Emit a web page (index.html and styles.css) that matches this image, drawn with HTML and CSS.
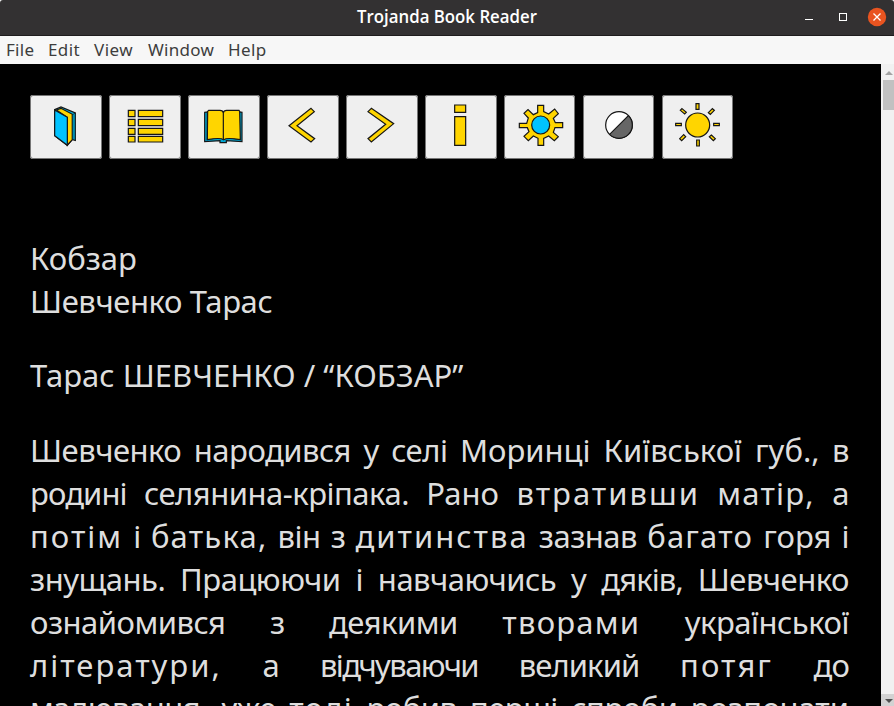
FILE: index.html
```html
<!DOCTYPE html>
<html lang="uk">
<head>
<meta charset="utf-8">
<title>Trojanda Book Reader</title>
<link rel="stylesheet" href="styles.css">
</head>
<body>
<div class="window">
  <header class="titlebar">
    <svg class="title" width="182" height="36"><text x="1" y="23" textLength="180" lengthAdjust="spacingAndGlyphs">Trojanda Book Reader</text></svg>
    <svg class="controls" viewBox="0 0 94 36" width="94" height="36">
      <path d="M5 19.5h8" stroke="#fff"/>
      <rect x="39.5" y="13.5" width="7" height="7" fill="none" stroke="#fff"/>
      <circle cx="77" cy="17" r="9.2" fill="#e95420"/>
      <path d="M73.5 13.5l7 7m0-7l-7 7" stroke="#fff" stroke-width="1.3"/>
    </svg>
  </header>
  <nav class="menubar">
    <span class="m-file">File</span><span class="m-edit">Edit</span><span class="m-view">View</span><span class="m-window">Window</span><span class="m-help">Help</span>
  </nav>
  <div class="body">
    <main class="page">
      <div class="toolbar">
        <button class="tool" aria-label="Open"><svg viewBox="30 27 216 192">
          <path d="M104 71l19-8 43 18v82l-9-3-15 18-38-29z" fill="#00b4e0"/>
          <path d="M109 72l14-5 34 18v76l-15 16V94z" fill="#ffd500"/>
          <path d="M104 72l38 22v84l-38-29z" fill="#00c3ff"/>
          <path d="M157 86l9-5v82l-9-3z" fill="#008fb0" stroke-width="2"/></svg></button>
        <button class="tool" aria-label="Contents"><svg viewBox="267 27 216 192">
          <g class="gold"><path d="M325 73h20v19h-20zM355 73h73v19h-73zM325 100h20v19h-20zM355 100h73v19h-73zM325 127h20v18h-20zM355 127h73v18h-73zM325 151h20v17h-20zM355 151h73v17h-73z"/></g></svg></button>
        <button class="tool" aria-label="Book"><svg viewBox="504 27 216 192">
          <path d="M554 79l8-1v82l37-5 11 4 11-4 37 5V78l8 1v88l-47-3v6h-19v-6l-46 3z" fill="#00a9d6"/>
          <path d="M563 76l3-3h34q9 0 10 8 1-8 10-8h37l2 3 2 85q-40-7-50 0-10-7-49 0z" fill="#ffd500"/>
          <path d="M610 80v79"/></svg></button>
        <button class="tool" aria-label="Previous"><svg viewBox="22 27 216 192">
          <path class="gold" d="M154 67l10 10-52 42 53 39-11 10-66-49z"/></svg></button>
        <button class="tool" aria-label="Next"><svg viewBox="259 27 216 192">
          <path class="gold" d="M335 67l-10 10 53 38-53 43 10 10 67-55z"/></svg></button>
        <button class="tool" aria-label="Information"><svg viewBox="496 27 216 192">
          <path class="gold" d="M585 57h33v22h-33zM585 92h33v86h-33z"/></svg></button>
        <button class="tool narrow" aria-label="Settings"><svg viewBox="42 27 213 192">
          <path class="gold" d="M143 58h18v19l15 7 18-15 11 14-15 14 6 13h22v15h-23l-5 14 15 13-12 12-17-14-15 7v21h-17v-21l-14-7-15 14-13-13 15-14-5-12H88v-13h22l5-16-13-14 12-11 16 15 13-6z"/>
          <circle cx="152" cy="117" r="27" fill="#00c3ff"/></svg></button>
        <button class="tool narrow" aria-label="Contrast"><svg viewBox="279 27 213 192">
          <circle cx="387" cy="117" r="40" fill="#fff"/>
          <path d="M415.300 88.700a40 40 0 0 1-56.600 56.600z" fill="#666"/></svg></button>
        <button class="tool narrow" aria-label="Brightness"><svg viewBox="516 27 213 192">
          <g class="gold"><circle cx="623" cy="117" r="36"/>
          <path d="M618 53h9v17h-9zM620 162h8v18h-8zM557 112h17v7h-17zM671 112h17v7h-17zM576 68l13 11-5 5-13-11zM667 68l-12 12 6 5 12-12zM581 146l-12 12 6 6 12-12zM664 147l12 11-6 6-12-12z"/></g></svg></button>
      </div>
      <article class="book">
        <p class="heading"><span class="w1">Кобзар</span><br><span class="w2">Шевченко Тарас</span></p>
        <p class="heading last"><span class="w3">Тарас ШЕВЧЕНКО / “КОБЗАР”</span></p>
        <p class="text">
          <span class="line">Шевченко народився у селі <b class="n">Моринці Київської губ.,</b> в</span>
          <span class="line"><b class="s">родині</b> селянина-кріпака. <b class="n">Рано</b> <b class="xw">втративши</b> <b class="w">матір,</b> а</span>
          <span class="line"><b class="xw">потім</b> і <b class="w">батька,</b> він з <b class="xw">дитинства</b> зазнав <b class="w">багато</b> <b class="n">горя</b> і</span>
          <span class="line">знущань. Працюючи і навчаючись у <b class="s">дяків,</b> Шевченко</span>
          <span class="line">ознайомився з деякими <b class="w">творами</b> української</span>
          <span class="line"><b class="xw">літератури,</b> а <b class="xs">відчуваючи</b> <b class="s">великий</b> <b class="xw">потяг</b> <b class="s">до</b></span>
          <span class="line">малювання, уже <b class="w">тоді</b> робив перші спроби <b class="n">розпочати</b></span>
        </p>
      </article>
    </main>
    <aside class="scrollbar">
      <svg class="arrow" viewBox="0 0 13 16"><path d="M4 11l4-4 4 4z" fill="#a3a3a3"/></svg>
      <div class="thumb"></div>
      <svg class="arrow down" viewBox="0 0 13 12"><path d="M4 5h8l-4 4z" fill="#505050"/></svg>
    </aside>
  </div>
</div>
</body>
</html>
```
FILE: styles.css
```css
* { box-sizing: border-box; }
body { margin: 0; background: #fff; overflow: hidden; font-family: "Noto Sans", "Open Sans", sans-serif; }
.window { height: 706px; display: flex; flex-direction: column; border-radius: 3px 3px 0 0; overflow: hidden; }
.titlebar { height: 36px; flex: none; padding-left: 356px; background: #333132; border-bottom: 1px solid #1e1c1d; display: flex; justify-content: space-between; }
.title { overflow: visible; fill: #fff; font: 600 17.5px "Open Sans", sans-serif; }
.menubar { height: 28px; flex: none; padding-left: 6px; background: #f7f7f7; color: #3d3d3d; display: flex; font-size: 17px; line-height: 27px; }
.m-file { width: 42px; letter-spacing: .3px; }
.m-edit { width: 46px; letter-spacing: .4px; }
.m-view { width: 54px; letter-spacing: .5px; }
.m-window { width: 80px; letter-spacing: .3px; }
.m-help { letter-spacing: .4px; }
.body { flex: 1; min-height: 0; display: flex; }
.page { width: 881px; background: #000; padding: 31px 32px 0 30px; overflow: hidden; }
.toolbar { display: flex; gap: 7px; }
.tool { width: 72px; height: 64px; flex: none; padding: 0; border: 0; border-radius: 3px; background: #efefef; box-shadow: inset 0 0 0 1px #767676; }
.narrow { width: 71px; }
.narrow + .narrow { margin-left: 1px; }
.tool svg { display: block; width: 100%; height: 100%; fill: none; stroke: #161616; stroke-width: 3.6; }
.tool .gold { fill: #ffd500; }
.book { margin-top: 78px; color: #dedede; font-size: 31px; line-height: 43px; }
.book p { margin: 0 0 31px; }
.book .last { margin-bottom: 32px; }
.heading { white-space: nowrap; }
.w2 { letter-spacing: -.4px; }
.text { letter-spacing: -.5px; }
.line { display: block; white-space: nowrap; text-align: justify; text-align-last: justify; }
.line b { font-weight: 400; }
.n { letter-spacing: 0; }
.s { letter-spacing: -.9px; }
.xs { letter-spacing: -1.6px; }
.w { letter-spacing: 1.2px; }
.xw { letter-spacing: 2px; }
.scrollbar { width: 13px; background: #f1f1f1; display: flex; flex-direction: column; }
.arrow { width: 13px; height: 16px; }
.thumb { height: 30px; margin-left: 2px; background: #c1c1c1; }
.down { height: 12px; margin-top: auto; background: #d2d2d2; }
```
